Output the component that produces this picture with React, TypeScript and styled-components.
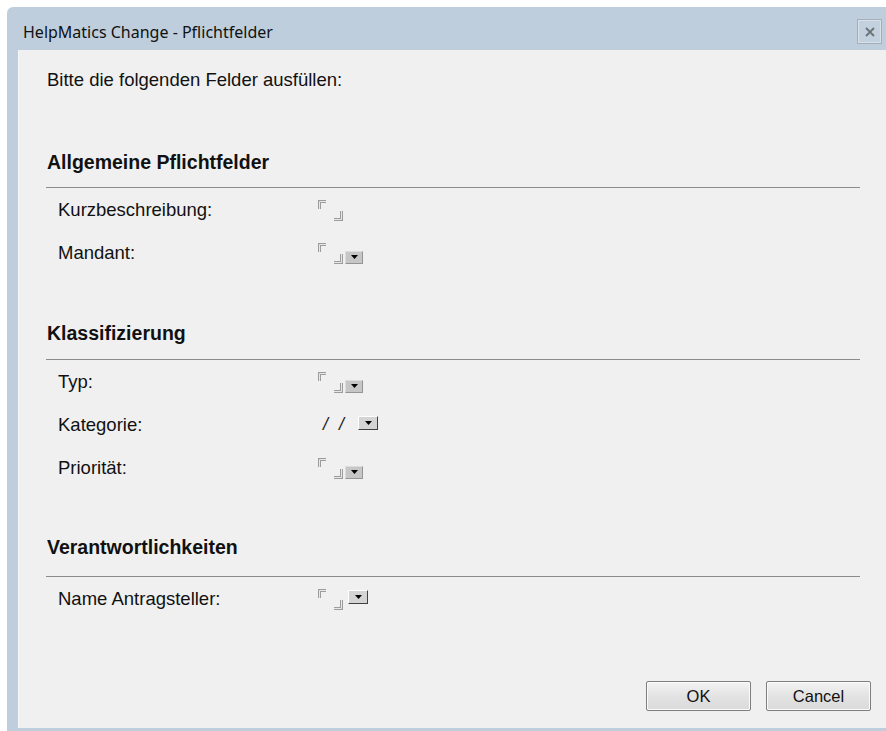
import React from "react";
import styled, { createGlobalStyle } from "styled-components";

const Global = createGlobalStyle`
  html, body {
    margin: 0;
    padding: 0;
    background: #ffffff;
    overflow: hidden;
  }
  body {
    width: 886px;
    height: 731px;
  }
`;

const Window = styled.div`
  margin: 7px 0 0 7px;
  width: 900px;
  height: 724px;
  background: #bfcedc;
  border-top-left-radius: 6px;
  display: flex;
  flex-direction: column;
`;

const TitleBar = styled.div`
  height: 43px;
  display: flex;
  align-items: center;
  justify-content: space-between;
  padding: 0 25px 0 16px;
  box-sizing: border-box;
`;

const Title = styled.span`
  font-family: "Noto Sans", "Open Sans", sans-serif;
  font-size: 16px;
  color: #111;
  margin-top: 7px;
`;

const CloseButton = styled.button`
  width: 25px;
  height: 25px;
  margin-top: 6px;
  padding: 0;
  border: 1px solid #a3aeb9;
  box-shadow: inset 0 0 0 1px rgba(255, 255, 255, 0.35);
  background: #c3d1de;
  display: flex;
  align-items: center;
  justify-content: center;
`;

const Content = styled.div`
  margin-left: 11px;
  margin-right: 11px;
  height: 678px;
  background: #f0f0f0;
  border-left: 1px solid #f7f7f7;
  box-sizing: border-box;
  display: flex;
  flex-direction: column;
  padding: 20px 0 0 27px;
`;

const Intro = styled.div`
  font-family: "Liberation Sans", Arial, sans-serif;
  font-size: 18.5px;
  line-height: 20px;
  color: #111;
  padding-left: 1px;
`;

const Section = styled.section<{ $top: number }>`
  margin-top: ${(p) => p.$top}px;
  width: 814px;
  display: flex;
  flex-direction: column;
`;

const SectionTitle = styled.h2<{ $gap: number }>`
  margin: 0 0 ${(p) => p.$gap}px 0;
  padding-left: 1px;
  font-family: "Liberation Sans", Arial, sans-serif;
  font-size: 19.5px;
  line-height: 20px;
  font-weight: bold;
  color: #111;
`;

const Rule = styled.hr`
  margin: 0;
  border: none;
  height: 1px;
  background: #8c8c8c;
`;

const Row = styled.div`
  height: 43px;
  display: flex;
  align-items: center;
  padding-left: 12px;
`;

const Label = styled.span`
  width: 260px;
  flex: none;
  font-family: "Liberation Sans", Arial, sans-serif;
  font-size: 18.5px;
  color: #111;
`;

const Field = styled.div`
  display: flex;
  align-items: flex-end;
  height: 22px;
`;

const Slashes = styled.span`
  font-family: "Liberation Sans", Arial, sans-serif;
  font-size: 18px;
  font-style: italic;
  color: #222;
  word-spacing: 6px;
  margin-left: 5px;
  align-self: center;
`;

const DropButton = styled.span<{ $raised?: boolean; $offset?: number }>`
  width: ${(p) => (p.$raised ? 20 : 18)}px;
  height: ${(p) => (p.$raised ? 14 : 13)}px;
  box-sizing: border-box;
  margin-left: ${(p) => p.$offset ?? 2}px;
  margin-bottom: ${(p) => (p.$raised ? 3 : 0)}px;
  background: ${(p) => (p.$raised ? "#d4d4d4" : "#c6c6c6")};
  border-style: solid;
  border-width: 1px;
  border-color: ${(p) =>
    p.$raised ? "#ffffff #404040 #404040 #ffffff" : "#dcdcdc #959595 #959595 #dcdcdc"};
  display: flex;
  align-items: center;
  justify-content: center;
  align-self: ${(p) => (p.$raised ? "center" : "flex-end")};
`;

const ButtonBar = styled.div`
  margin-top: auto;
  margin-bottom: 17px;
  padding-right: 25px;
  display: flex;
  justify-content: flex-end;
  gap: 15px;
`;

const DialogButton = styled.button`
  width: 105px;
  height: 30px;
  font-family: "Liberation Sans", Arial, sans-serif;
  font-size: 16.5px;
  color: #111;
  background: linear-gradient(#f3f3f3, #e3e3e3 50%, #dadada);
  border: 1px solid #7e7e7e;
  border-radius: 2px;
  box-shadow: inset 0 0 0 1px #fbfbfb;
  padding: 0;
`;

// Sunken corner marks of an empty entry field
const CornerMarks = () => (
  <svg width="25" height="21" viewBox="0 0 25 21">
    <path d="M1.5 9 V1.5 H8" fill="none" stroke="#9c9c9c" strokeWidth="3" />
    <path d="M1.5 9 V1.5 H8" fill="none" stroke="#e8e8e8" strokeWidth="1" />
    <path d="M16 19.5 H23.5 V11" fill="none" stroke="#9c9c9c" strokeWidth="3" />
    <path d="M16 19.5 H23.5 V11" fill="none" stroke="#e8e8e8" strokeWidth="1" />
  </svg>
);

const Arrow = () => (
  <svg width="7" height="4" viewBox="0 0 7 4">
    <path d="M0 0 H7 L3.5 4 Z" fill="#000" />
  </svg>
);

type FieldKind = "text" | "select" | "path" | "person";

const FieldInput = ({ kind }: { kind: FieldKind }) => {
  if (kind === "path") {
    return (
      <Field>
        <Slashes>/ /</Slashes>
        <DropButton $raised $offset={14}>
          <Arrow />
        </DropButton>
      </Field>
    );
  }
  return (
    <Field>
      <CornerMarks />
      {kind === "select" && (
        <DropButton>
          <Arrow />
        </DropButton>
      )}
      {kind === "person" && (
        <DropButton $raised $offset={5}>
          <Arrow />
        </DropButton>
      )}
    </Field>
  );
};

const sections: {
  title: string;
  top: number;
  gap: number;
  fields: { label: string; kind: FieldKind }[];
}[] = [
  {
    title: "Allgemeine Pflichtfelder",
    top: 62,
    gap: 15,
    fields: [
      { label: "Kurzbeschreibung:", kind: "text" },
      { label: "Mandant:", kind: "select" },
    ],
  },
  {
    title: "Klassifizierung",
    top: 49,
    gap: 16,
    fields: [
      { label: "Typ:", kind: "select" },
      { label: "Kategorie:", kind: "path" },
      { label: "Priorität:", kind: "select" },
    ],
  },
  {
    title: "Verantwortlichkeiten",
    top: 48,
    gap: 19,
    fields: [{ label: "Name Antragsteller:", kind: "person" }],
  },
];

export default function App() {
  return (
    <>
      <Global />
      <Window>
        <TitleBar>
          <Title>HelpMatics Change - Pflichtfelder</Title>
          <CloseButton aria-label="Schließen">
            <svg width="10" height="10" viewBox="0 0 10 10">
              <path d="M1 1 L9 9 M9 1 L1 9" stroke="#6f747a" strokeWidth="2" />
            </svg>
          </CloseButton>
        </TitleBar>
        <Content>
          <Intro>Bitte die folgenden Felder ausfüllen:</Intro>
          {sections.map((s) => (
            <Section key={s.title} $top={s.top}>
              <SectionTitle $gap={s.gap}>{s.title}</SectionTitle>
              <Rule />
              {s.fields.map((f) => (
                <Row key={f.label}>
                  <Label>{f.label}</Label>
                  <FieldInput kind={f.kind} />
                </Row>
              ))}
            </Section>
          ))}
          <ButtonBar>
            <DialogButton>OK</DialogButton>
            <DialogButton>Cancel</DialogButton>
          </ButtonBar>
        </Content>
      </Window>
    </>
  );
}
